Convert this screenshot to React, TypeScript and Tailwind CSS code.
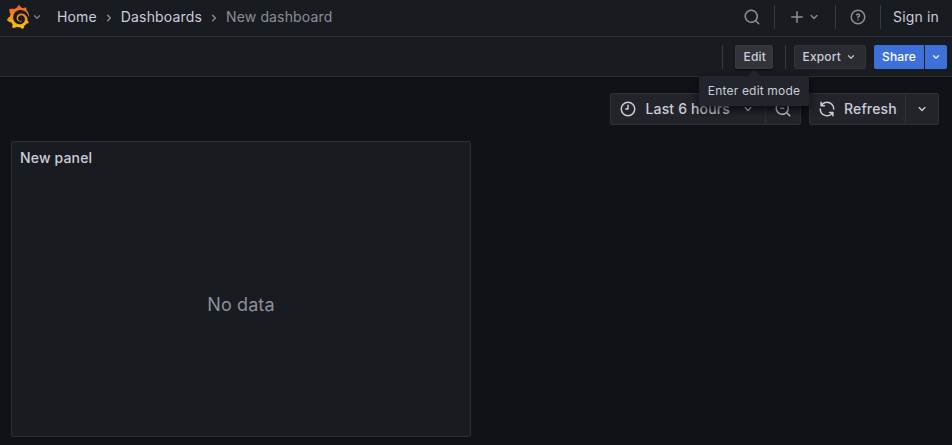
import type { ReactNode } from 'react';
import { SiGrafana } from 'react-icons/si';

const RING = 'M12,2A10,10,0,1,0,22,12,10,10,0,0,0,12,2Zm0,18a8,8,0,1,1,8-8A8,8,0,0,1,12,20Z';
const LENS =
  'M21.71,20.29,18,16.61A9,9,0,1,0,16.61,18l3.68,3.68a1,1,0,0,0,1.42,0A1,1,0,0,0,21.71,20.29ZM11,18a7,7,0,1,1,7-7A7,7,0,0,1,11,18Z';

const icons = {
  down: 'M17,9.17a1,1,0,0,0-1.41,0L12,12.71,8.46,9.17a1,1,0,0,0-1.41,0,1,1,0,0,0,0,1.42l4.24,4.24a1,1,0,0,0,1.42,0L17,10.59A1,1,0,0,0,17,9.17Z',
  right:
    'M14.83,11.29,10.59,7.05a1,1,0,0,0-1.42,0,1,1,0,0,0,0,1.41L12.71,12,9.17,15.54a1,1,0,0,0,0,1.41,1,1,0,0,0,.71.29,1,1,0,0,0,.71-.29l4.24-4.24A1,1,0,0,0,14.83,11.29Z',
  search: LENS,
  zoomOut: LENS + 'M13,10H9a1,1,0,0,0,0,2h4a1,1,0,0,0,0-2Z',
  plus: 'M19,11H13V5a1,1,0,0,0-2,0v6H5a1,1,0,0,0,0,2h6v6a1,1,0,0,0,2,0V13h6a1,1,0,0,0,0-2Z',
  help:
    RING +
    'M11.29,15.29a1.58,1.58,0,0,0-.12.15.76.76,0,0,0-.09.18.64.64,0,0,0-.06.18,1.36,1.36,0,0,0,0,.2.84.84,0,0,0,.08.38.9.9,0,0,0,.54.54.94.94,0,0,0,.76,0,.9.9,0,0,0,.54-.54A1,1,0,0,0,13,16a1,1,0,0,0-.29-.71A1,1,0,0,0,11.29,15.29ZM12,7A3,3,0,0,0,9.4,8.5a1,1,0,1,0,1.73,1A1,1,0,0,1,12,9a1,1,0,0,1,0,2,1,1,0,0,0-1,1v1a1,1,0,0,0,2,0v-.18A3,3,0,0,0,12,7Z',
  clock: RING + 'M12,6a1,1,0,0,0-1,1v4H9a1,1,0,0,0,0,2h3a1,1,0,0,0,1-1V7A1,1,0,0,0,12,6Z',
  sync: 'M19.91,15.51H15.38a1,1,0,0,0,0,2h2.4A8,8,0,0,1,4,12a1,1,0,1,0-2,0,10,10,0,0,0,16.88,7.23V21a1,1,0,0,0,2,0V16.5A1,1,0,0,0,19.91,15.51ZM12,2A10,10,0,0,0,5.12,4.77V3a1,1,0,0,0-2,0V7.5a1,1,0,0,0,1,1h4.5a1,1,0,0,0,0-2H6.22A8,8,0,0,1,20,12a1,1,0,0,0,2,0A10,10,0,0,0,12,2Z',
};

function Icon({ name, className = 'size-4' }: { name: keyof typeof icons; className?: string }) {
  return (
    <svg viewBox="0 0 24 24" fill="currentColor" className={`shrink-0 ${className}`}>
      <path d={icons[name]} />
    </svg>
  );
}

function Divider({ className = '' }: { className?: string }) {
  return <div className={`h-6 w-px shrink-0 bg-[#393b41] ${className}`} />;
}

function ToolButton({ children, className = '' }: { children: ReactNode; className?: string }) {
  return (
    <button className={`flex items-center border border-[#303136] bg-[#222429] text-[#ccccdc] ${className}`}>
      {children}
    </button>
  );
}

function Logo() {
  return (
    <>
      <svg className="absolute size-0">
        <defs>
          <linearGradient id="flame" x1="0" y1="1" x2="0" y2="0">
            <stop offset="0" stopColor="#fcc80b" />
            <stop offset="1" stopColor="#f05a28" />
          </linearGradient>
        </defs>
      </svg>
      <SiGrafana className="size-6 shrink-0 fill-[url(#flame)]" />
    </>
  );
}

function TopBar() {
  return (
    <header className="flex h-[37px] items-center border-b border-[#2d2f35] bg-[#181b1f] pb-[2px] pl-[6px] pr-[13px] text-sm tracking-[0.15px] text-[#ccccdc]">
      <Logo />
      <Icon name="down" className="mr-px size-[14px] text-[#8c8d98]" />
      <nav className="ml-3 flex items-center">
        <span>Home</span>
        <Icon name="right" className="mx-1 mt-[2px] size-4 text-[#8c8d98]" />
        <span>Dashboards</span>
        <Icon name="right" className="mx-1 mt-[2px] size-4 text-[#8c8d98]" />
        <span className="text-[#8d8e9a]">New dashboard</span>
      </nav>
      <div className="ml-auto flex items-center text-[#8d8e9a]">
        <Icon name="search" className="size-[18px]" />
        <Divider className="ml-[13px]" />
        <Icon name="plus" className="ml-[13px] size-[18px]" />
        <Icon name="down" className="size-4" />
        <Divider className="ml-[13px]" />
        <Icon name="help" className="ml-[13px] size-[18px]" />
        <Divider className="ml-[13px]" />
        <span className="ml-3 text-[#ccccdc]">Sign in</span>
      </div>
    </header>
  );
}

function Toolbar() {
  return (
    <div className="flex h-10 items-center justify-end border-b border-[#2d2f35] bg-[#181b1f] pr-[5px] text-xs font-medium tracking-[0.15px] text-[#ccccdc]">
      <Divider />
      <div className="relative ml-3">
        <button className="flex h-6 w-[38px] items-center rounded-xs border border-[#3a3b41] bg-[#323439] pl-[7.5px] shadow-[0_1px_2px_rgba(1,4,9,0.75)]">
          Edit
        </button>
        <div className="absolute left-1/2 top-[31px] z-10 flex h-[30px] w-[110px] -translate-x-1/2 items-center justify-center whitespace-nowrap rounded-xs bg-[#22252b] text-xs font-normal tracking-[0.18px] shadow-[0_4px_8px_rgba(1,4,9,0.75)]">
          <svg viewBox="0 0 14 7" className="absolute -top-[6px] left-1/2 h-[7px] w-[14px] -translate-x-1/2 fill-[#22252b]">
            <path d="M0 7 7 0l7 7Z" />
          </svg>
          Enter edit mode
        </div>
      </div>
      <Divider className="ml-3" />
      <button className="ml-2 flex h-6 w-[72px] items-center rounded-xs border border-[#34353a] bg-[#2a2c31] pl-[7.5px]">
        Export
        <Icon name="down" className="ml-[3.5px] size-[14px]" />
      </button>
      <button className="ml-2 flex h-6 w-[50px] items-center justify-center rounded-l-xs bg-[#3d71d9] text-white">
        Share
      </button>
      <button className="ml-px flex h-6 w-[22px] items-center justify-center rounded-r-xs bg-[#3d71d9] text-white">
        <Icon name="down" className="size-[14px]" />
      </button>
    </div>
  );
}

export default function App() {
  return (
    <div className="h-[445px] w-[952px] overflow-hidden bg-[#111217] font-['Inter',sans-serif]">
      <TopBar />
      <Toolbar />
      <main className="px-[11px] pt-4">
        <div className="flex h-8 justify-end pr-[2px] text-sm font-medium tracking-[0.15px]">
          <ToolButton className="w-[156px] rounded-l-xs pl-2">
            <Icon name="clock" className="size-[18px]" />
            <span className="ml-[8.5px]">Last 6 hours</span>
            <Icon name="down" className="ml-[9.5px] size-4" />
          </ToolButton>
          <ToolButton className="-ml-px w-9 justify-center rounded-r-xs">
            <Icon name="zoomOut" className="size-[18px]" />
          </ToolButton>
          <ToolButton className="ml-2 w-[97px] rounded-l-xs pl-2">
            <Icon name="sync" className="size-[18px]" />
            <span className="ml-2">Refresh</span>
          </ToolButton>
          <ToolButton className="-ml-px w-[34px] justify-center rounded-r-xs">
            <Icon name="down" className="size-4" />
          </ToolButton>
        </div>
        <section className="mt-4 flex h-[296px] w-[460px] flex-col rounded-xs border border-[#2d2f35] bg-[#181b1f]">
          <h2 className="flex h-8 items-center px-2 text-sm font-medium tracking-[0.15px] text-[#ccccdc]">New panel</h2>
          <div className="flex flex-1 items-center justify-center pb-px text-lg tracking-[0.1px] text-[#8d8e9a]">No data</div>
        </section>
      </main>
    </div>
  );
}
